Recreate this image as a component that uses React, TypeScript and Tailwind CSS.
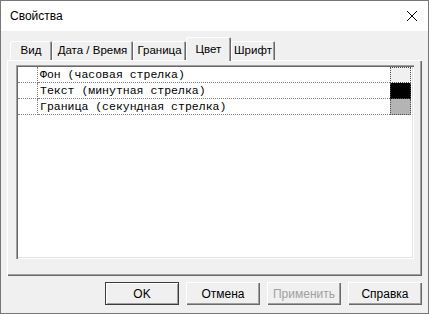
import React from "react"

const raised =
  "shadow-[inset_1px_1px_0_#ffffff,inset_-1px_-1px_0_#696969,inset_-2px_-2px_0_#a0a0a0]"

const tabs = [
  { label: "Вид", w: "w-[42px]" },
  { label: "Дата / Время", w: "w-[81px]" },
  { label: "Граница", w: "w-[53px]" },
  { label: "Цвет", w: "w-[45px]", active: true },
  { label: "Шрифт", w: "w-[44px]" },
]

const rows = [
  { text: "Фон (часовая стрелка)", color: "bg-[#f0f0f0]" },
  { text: "Текст (минутная стрелка)", color: "bg-black" },
  { text: "Граница (секундная стрелка)", color: "bg-[#b4b4b4]" },
]

function Button({ label, isDefault, disabled }: { label: string; isDefault?: boolean; disabled?: boolean }) {
  return (
    <div
      className={`w-[74px] h-[23px] flex items-center justify-center text-[12px] bg-[#f0f0f0] ${
        isDefault
          ? "border border-[#3c3c3c] shadow-[inset_1px_1px_0_#ffffff,inset_-1px_-1px_0_#a0a0a0]"
          : raised
      } ${disabled ? "text-[#a0a0a0]" : "text-black"}`}
    >
      {label}
    </div>
  )
}

export default function App() {
  return (
    <div
      className="w-[429px] h-[314px] border border-[#777777] bg-[#f0f0f0] flex flex-col overflow-hidden"
      style={{ fontFamily: '"Liberation Sans", Arial, sans-serif' }}
    >
      {/* title bar */}
      <div className="h-[30px] bg-white flex items-center justify-between pl-[9px] pr-[9px]">
        <span className="text-[12px] text-black">Свойства</span>
        <svg width="12" height="12" viewBox="0 0 12 12" className="mr-[1px]">
          <path d="M1 1 L11 11 M11 1 L1 11" stroke="#000" strokeWidth="1" fill="none" />
        </svg>
      </div>

      {/* tabs */}
      <div className="h-[29px] flex items-end pl-[9px]">
        {tabs.map((t) =>
          t.active ? (
            <div
              key={t.label}
              className={`${t.w} h-[24px] -mb-px relative z-10 bg-[#f0f0f0] rounded-t-[2px] flex justify-center pt-[4px] text-[11.5px] text-black shadow-[inset_1px_1px_0_#ffffff,inset_-1px_0_0_#696969,inset_-2px_0_0_#a0a0a0]`}
            >
              {t.label}
            </div>
          ) : (
            <div
              key={t.label}
              className={`${t.w} h-[19px] rounded-t-[2px] flex items-center justify-center text-[11.5px] text-black whitespace-nowrap shadow-[inset_1px_1px_0_#ffffff,inset_-1px_0_0_#696969,inset_-2px_0_0_#a0a0a0]`}
            >
              {t.label}
            </div>
          )
        )}
      </div>

      {/* tab page */}
      <div className={`mx-[6px] h-[216px] pt-[5px] pl-[9px] pr-[8px] pb-[17px] ${raised}`}>
        <div className="h-full bg-white p-[2px] shadow-[inset_1px_1px_0_#a0a0a0,inset_2px_2px_0_#696969,inset_-1px_-1px_0_#ffffff,inset_-2px_-2px_0_#e3e3e3]">
          {rows.map((r, i) => (
            <div key={r.text} className="flex h-[16px]">
              <div className="w-[20px] border-b border-r border-dotted border-[#808080]" />
              <div
                className="flex-1 border-b border-dotted border-[#808080] flex items-center pl-[2px] text-[11.5px] text-black whitespace-nowrap"
                style={{ fontFamily: '"Liberation Mono", "Courier New", monospace' }}
              >
                {r.text}
              </div>
              <div
                className={`w-[21px] border-l border-r border-b border-dotted border-[#505050] ${r.color} ${
                  i === 0 ? "border-t" : ""
                }`}
              />
              <div className="w-[1px]" />
            </div>
          ))}
        </div>
      </div>

      {/* buttons */}
      <div className="flex justify-end gap-[7px] pt-[6px] pr-[6px]">
        <Button label="OK" isDefault />
        <Button label="Отмена" />
        <Button label="Применить" disabled />
        <Button label="Справка" />
      </div>
    </div>
  )
}
